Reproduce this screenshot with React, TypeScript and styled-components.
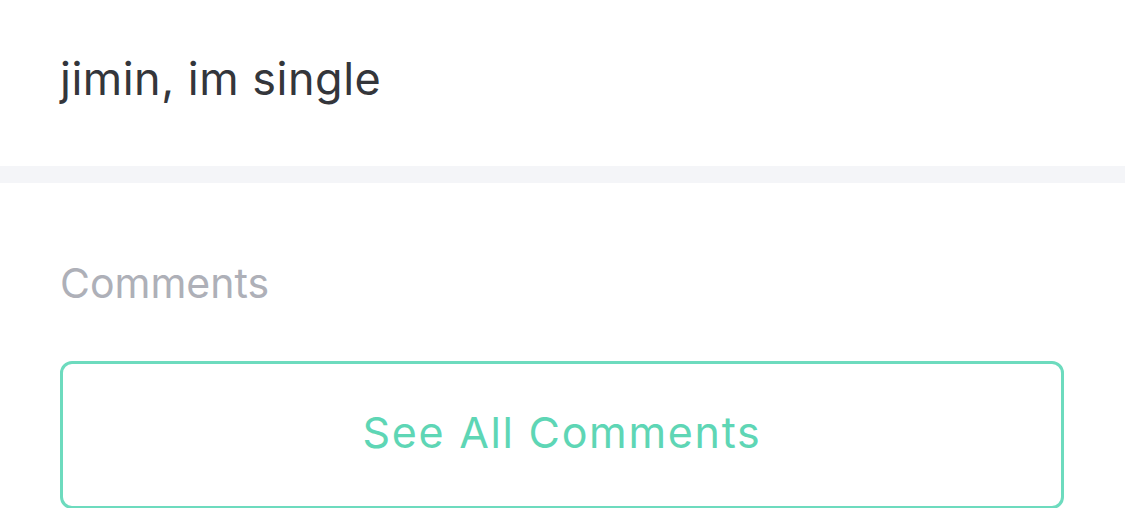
import styled, { createGlobalStyle } from "styled-components";

const GlobalStyle = createGlobalStyle`
  html, body {
    margin: 0;
    padding: 0;
    background: #fff;
    font-family: Inter, "Noto Sans", sans-serif;
    -webkit-font-smoothing: antialiased;
  }
`;

const Page = styled.div`
  width: 1125px;
  height: 508px;
  overflow: hidden;
  background: #fff;
`;

const PostBody = styled.div`
  height: 166px;
  box-sizing: border-box;
  padding: 52px 60px 0;
  font-size: 45px;
  line-height: 54px;
  letter-spacing: 0.5px;
  color: #34363b;
`;

const SectionGap = styled.div`
  height: 17px;
  background: #f4f5f8;
`;

const CommentsSection = styled.section`
  padding: 0 61px 0 60px;
`;

const SectionTitle = styled.h3`
  margin: 0;
  padding-top: 75px;
  font-size: 41px;
  line-height: 50px;
  font-weight: 400;
  color: #aeb0b8;
`;

const OutlineButton = styled.button`
  display: flex;
  align-items: center;
  justify-content: center;
  width: 100%;
  height: 148px;
  margin-top: 53px;
  padding: 0 0 6px;
  box-sizing: border-box;
  border: 3px solid #6ddbbe;
  border-radius: 12px;
  background: #fff;
  color: #5ed6b5;
  font-family: inherit;
  font-size: 43px;
  letter-spacing: 1.7px;
`;

export default function App() {
  return (
    <Page>
      <GlobalStyle />
      <PostBody>jimin, im single</PostBody>
      <SectionGap />
      <CommentsSection>
        <SectionTitle>Comments</SectionTitle>
        <OutlineButton>See All Comments</OutlineButton>
      </CommentsSection>
    </Page>
  );
}
